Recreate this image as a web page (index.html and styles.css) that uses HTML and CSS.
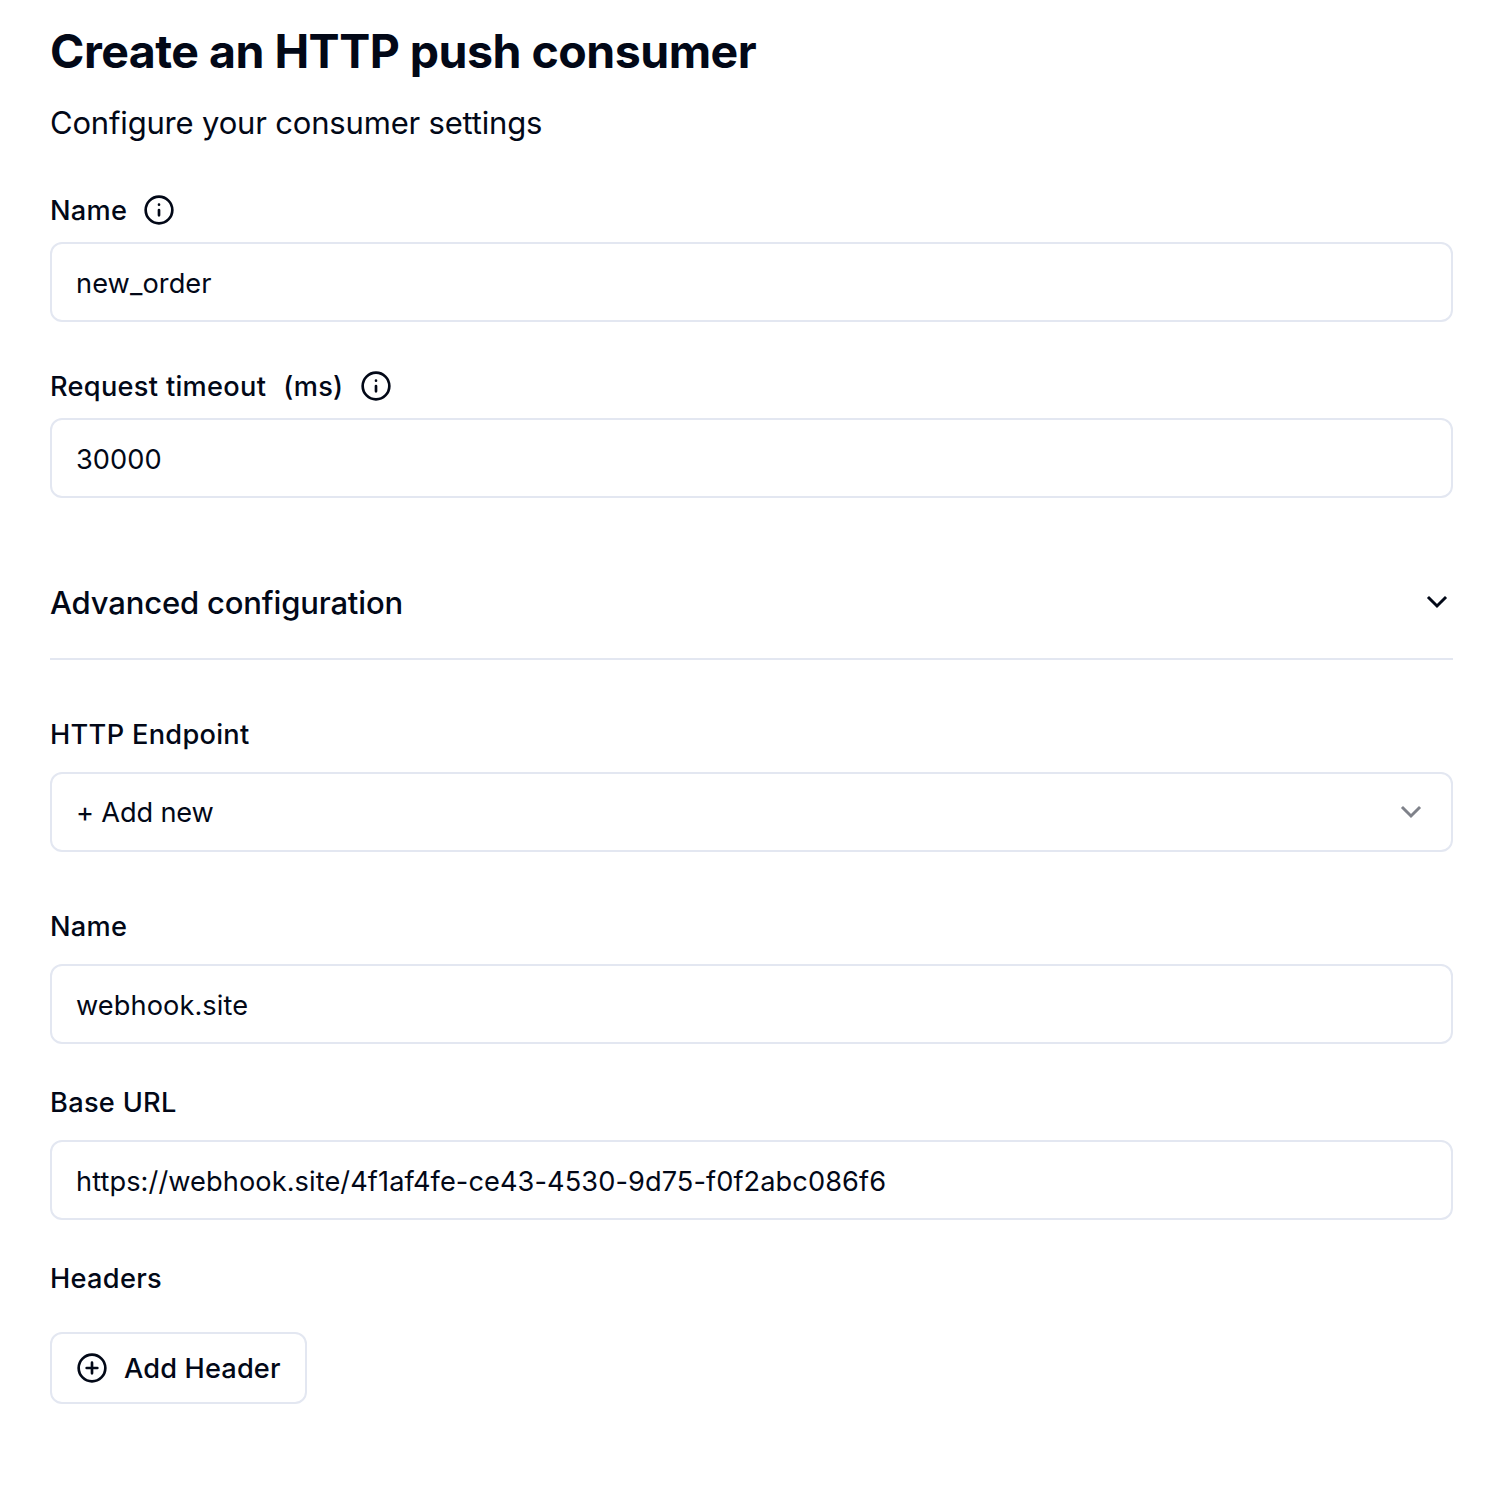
FILE: index.html
```html
<!DOCTYPE html>
<html lang="en">
<head>
<meta charset="utf-8">
<title>Create an HTTP push consumer</title>
<link rel="stylesheet" href="styles.css">
</head>
<body>
<main class="page">
  <h1 class="title">Create an HTTP push consumer</h1>
  <p class="subtitle">Configure your consumer settings</p>

  <div class="field">
    <label class="label" for="name"><span>Name</span>
      <svg class="icon" viewBox="0 0 24 24"><circle cx="12" cy="12" r="10"/><path d="M12 16v-4M12 8h.01"/></svg>
    </label>
    <input class="input" id="name" value="new_order">
  </div>
  <div class="field">
    <label class="label label-unit" for="timeout"><span>Request timeout</span><span>(ms)</span>
      <svg class="icon" viewBox="0 0 24 24"><circle cx="12" cy="12" r="10"/><path d="M12 16v-4M12 8h.01"/></svg>
    </label>
    <input class="input" id="timeout" value="30000">
  </div>

  <button class="accordion" type="button">
    <span>Advanced configuration</span>
    <svg class="icon icon-chevron" viewBox="0 0 24 24"><path d="m6 9 6 6 6-6"/></svg>
  </button>

  <div class="field field-loose">
    <span class="label"><span>HTTP Endpoint</span></span>
    <button class="input select" type="button">
      <span>+ Add new</span>
      <svg class="icon icon-chevron icon-muted" viewBox="0 0 24 24"><path d="m6 9 6 6 6-6"/></svg>
    </button>
  </div>
  <div class="endpoint">
    <div class="field field-loose">
      <label class="label" for="endpoint-name"><span>Name</span></label>
      <input class="input" id="endpoint-name" value="webhook.site">
    </div>
    <div class="field field-loose">
      <label class="label" for="base-url"><span>Base URL</span></label>
      <input class="input" id="base-url" value="https://webhook.site/4f1af4fe-ce43-4530-9d75-f0f2abc086f6">
    </div>
    <div class="headers">
      <span class="label"><span>Headers</span></span>
      <button class="add" type="button">
        <svg class="icon" viewBox="0 0 24 24"><circle cx="12" cy="12" r="10"/><path d="M8 12h8M12 8v8"/></svg>
        <span>Add Header</span>
      </button>
    </div>
  </div>
</main>
</body>
</html>
```

FILE: styles.css
```css
* { box-sizing: border-box; }
body { margin: 0; background: #fff; color: #020817; font-family: Inter, "Liberation Sans", sans-serif; }
button, input { font: inherit; color: inherit; }
.page { display: flex; flex-direction: column; padding: 19px 39px 0 50px; }
.title { margin: 0; font-size: 46.5px; line-height: 64px; font-weight: 700; letter-spacing: -0.52px; }
.subtitle { margin: 16px 0 0; font-size: 31px; line-height: 48px; letter-spacing: -0.18px; }
.field { display: flex; flex-direction: column; margin-bottom: 48px; }
.subtitle + .field { margin-top: 47px; }
.label { display: flex; align-items: center; gap: 16px; height: 32px; margin-bottom: 16px; font-size: 27.2px; line-height: 32px; font-weight: 500; letter-spacing: 0.3px; }
.label span { padding-top: 2px; }
.label-unit { gap: 17px; }
.icon { width: 32px; height: 32px; flex: none; fill: none; stroke: currentColor; stroke-width: 2; stroke-linecap: round; stroke-linejoin: round; }
.icon-chevron { stroke-width: 2.2; stroke-linecap: square; stroke-linejoin: miter; }
.icon-muted { opacity: 0.5; }
.input { width: 100%; height: 80px; border: 2px solid #e3e7f1; border-radius: 12px; padding: 2px 24px 0; background: #fff; font-size: 27.2px; letter-spacing: 0.08px; outline: none; }
.accordion { display: flex; align-items: center; justify-content: space-between; height: 116px; margin: -2px 0 58px; padding: 2px 0 0; border: 0; border-bottom: 2px solid #e3e7f1; background: none; font-size: 31px; font-weight: 500; letter-spacing: -0.16px; }
.select { display: flex; align-items: center; justify-content: space-between; padding: 0 24px; letter-spacing: -0.15px; }
.field-loose { margin-bottom: 42px; }
.field-loose .label { margin-bottom: 22px; }
.endpoint { padding-top: 16px; }
.headers .label { margin-bottom: 38px; }
.add { display: flex; align-items: center; gap: 16px; width: 257px; height: 72px; padding: 0 24px; border: 2px solid #e3e7f1; border-radius: 12px; background: #fff; font-size: 27.2px; font-weight: 500; letter-spacing: 0.15px; white-space: nowrap; }
```
